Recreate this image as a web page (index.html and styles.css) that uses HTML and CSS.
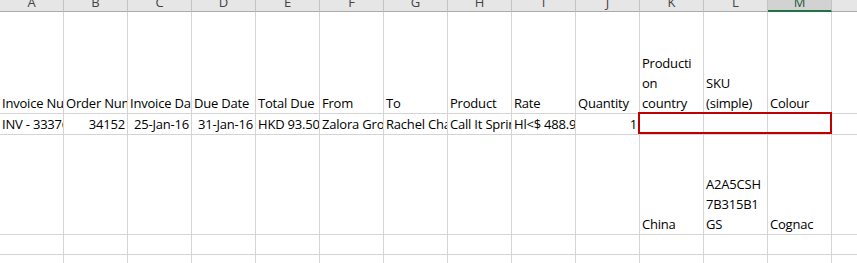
FILE: index.html
```html
<!DOCTYPE html>
<html lang="en">
<head>
<meta charset="utf-8">
<title>Invoices</title>
<link rel="stylesheet" href="styles.css">
</head>
<body>
<div class="sheet">
  <!-- column headers -->
  <div class="hd">A</div>
  <div class="hd">B</div>
  <div class="hd">C</div>
  <div class="hd">D</div>
  <div class="hd">E</div>
  <div class="hd">F</div>
  <div class="hd">G</div>
  <div class="hd">H</div>
  <div class="hd">I</div>
  <div class="hd">J</div>
  <div class="hd">K</div>
  <div class="hd">L</div>
  <div class="hd hd-active">M</div>
  <div class="hd">N</div>

  <!-- row 1: field names -->
  <div class="c">Invoice Number</div>
  <div class="c">Order Number</div>
  <div class="c">Invoice Date</div>
  <div class="c">Due Date</div>
  <div class="c">Total Due</div>
  <div class="c">From</div>
  <div class="c">To</div>
  <div class="c">Product</div>
  <div class="c">Rate</div>
  <div class="c">Quantity</div>
  <div class="c wrap">Producti<br>on<br>country</div>
  <div class="c wrap">SKU<br>(simple)</div>
  <div class="c">Colour</div>
  <div class="c"></div>

  <!-- row 2: invoice line -->
  <div class="c">INV - 33376</div>
  <div class="c num">34152</div>
  <div class="c num">25-Jan-16</div>
  <div class="c num">31-Jan-16</div>
  <div class="c">HKD 93.50</div>
  <div class="c">Zalora Group</div>
  <div class="c">Rachel Chan</div>
  <div class="c">Call It Spring</div>
  <div class="c">Hl&lt;$ 488.90</div>
  <div class="c num">1</div>
  <div class="c"></div>
  <div class="c"></div>
  <div class="c"></div>
  <div class="c"></div>

  <!-- row 3: product details -->
  <div class="c"></div>
  <div class="c"></div>
  <div class="c"></div>
  <div class="c"></div>
  <div class="c"></div>
  <div class="c"></div>
  <div class="c"></div>
  <div class="c"></div>
  <div class="c"></div>
  <div class="c"></div>
  <div class="c">China</div>
  <div class="c wrap">A2A5CSH<br>7B315B1<br>GS</div>
  <div class="c">Cognac</div>
  <div class="c"></div>

  <!-- rows 4-5: empty -->
  <div class="c"></div><div class="c"></div><div class="c"></div><div class="c"></div>
  <div class="c"></div><div class="c"></div><div class="c"></div><div class="c"></div>
  <div class="c"></div><div class="c"></div><div class="c"></div><div class="c"></div>
  <div class="c"></div><div class="c"></div>

  <div class="c"></div><div class="c"></div><div class="c"></div><div class="c"></div>
  <div class="c"></div><div class="c"></div><div class="c"></div><div class="c"></div>
  <div class="c"></div><div class="c"></div><div class="c"></div><div class="c"></div>
  <div class="c"></div><div class="c"></div>

  <!-- highlighted range K2:M2 -->
  <div class="selection"></div>
</div>
</body>
</html>
```

FILE: styles.css
```css
* {
  box-sizing: border-box;
}

html,
body {
  margin: 0;
  padding: 0;
  background: #ffffff;
  overflow: hidden;
}

.sheet {
  position: relative;
  display: grid;
  grid-template-columns: repeat(14, 64px);
  grid-template-rows: 12px 102px 21px 100px 20px 20px;
  font-family: "Open Sans", "Liberation Sans", sans-serif;
  font-size: 13px;
  color: #000000;
}

/* column header strip */
.hd {
  display: flex;
  align-items: flex-end;
  justify-content: center;
  overflow: hidden;
  padding-bottom: 3px;
  line-height: 12px;
  background: #e6e6e6;
  color: #444444;
  border-right: 1px solid #c3c3c3;
  border-bottom: 1px solid #ababab;
}

.hd-active {
  background: #d2d2d2;
  color: #1f5a3b;
  border-bottom: 2px solid #217346;
  padding-bottom: 2px;
}

/* worksheet cells */
.c {
  display: flex;
  flex-direction: column;
  justify-content: flex-end;
  overflow: hidden;
  white-space: nowrap;
  line-height: 20px;
  letter-spacing: -0.2px;
  padding: 0 2px 0 2px;
  border-right: 1px solid #d4d4d4;
  border-bottom: 1px solid #d4d4d4;
}

.num {
  align-items: flex-end;
}

.wrap {
  white-space: normal;
}

.selection {
  position: absolute;
  left: 638px;
  top: 112px;
  width: 194px;
  height: 22px;
  border: 2px solid #c00000;
  pointer-events: none;
}
```
